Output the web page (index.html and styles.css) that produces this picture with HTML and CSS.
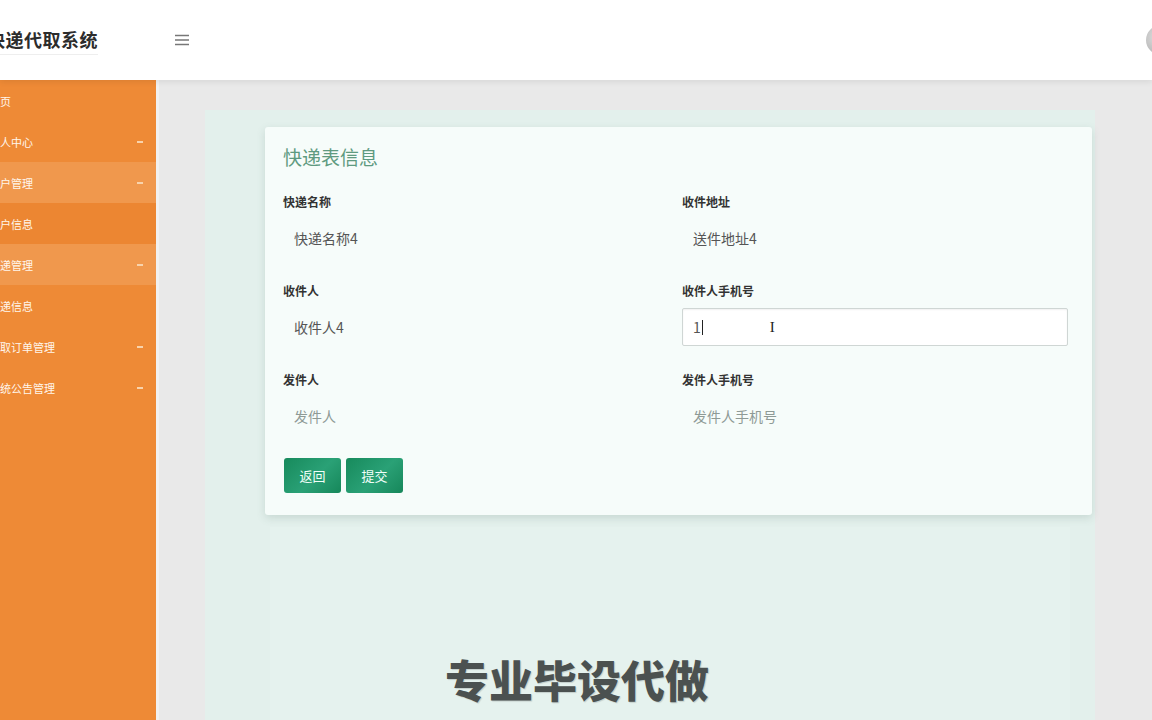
FILE: index.html
```html
<!DOCTYPE html>
<html lang="zh-CN">
<head>
<meta charset="utf-8">
<title>快递代取系统</title>
<link rel="stylesheet" href="styles.css">
</head>
<body>
<div class="app">
  <header class="topbar">
    <div class="brand"><span class="brand-title">快递代取系统</span></div>
    <button class="hamburger" type="button" aria-label="menu">
      <svg width="16" height="12" viewBox="0 0 16 12"><path d="M1 1.5h14M1 6h14M1 10.5h14" stroke="#777" stroke-width="1.4" fill="none"/></svg>
    </button>
    <div class="spacer"></div>
    <div class="avatar"></div>
  </header>
  <div class="layout">
    <aside class="sidebar">
      <ul class="menu">
        <li class="item"><span class="label">首页</span></li>
        <li class="item"><span class="label">个人中心</span><i class="arrow"></i></li>
        <li class="item light"><span class="label">用户管理</span><i class="arrow"></i></li>
        <li class="item dark"><span class="label">用户信息</span></li>
        <li class="item light"><span class="label">快递管理</span><i class="arrow"></i></li>
        <li class="item"><span class="label">快递信息</span></li>
        <li class="item"><span class="label">代取订单管理</span><i class="arrow"></i></li>
        <li class="item"><span class="label">系统公告管理</span><i class="arrow"></i></li>
      </ul>
    </aside>
    <main class="main">
      <div class="stage">
        <section class="card">
          <h2 class="card-title">快递表信息</h2>
          <form class="form">
            <div class="field">
              <label class="field-label">快递名称</label>
              <input class="field-input" value="快递名称4" readonly>
            </div>
            <div class="field">
              <label class="field-label">收件地址</label>
              <input class="field-input" value="送件地址4" readonly>
            </div>
            <div class="field">
              <label class="field-label">收件人</label>
              <input class="field-input" value="收件人4" readonly>
            </div>
            <div class="field">
              <label class="field-label">收件人手机号</label>
              <div class="field-input focused"><span>1</span><i class="caret"></i><span class="ibeam">I</span></div>
            </div>
            <div class="field">
              <label class="field-label">发件人</label>
              <input class="field-input" placeholder="发件人">
            </div>
            <div class="field">
              <label class="field-label">发件人手机号</label>
              <input class="field-input" placeholder="发件人手机号">
            </div>
            <div class="actions">
              <button class="btn" type="button">返回</button>
              <button class="btn" type="button">提交</button>
            </div>
          </form>
        </section>
        <div class="lower">
          <div class="watermark">专业毕设代做</div>
        </div>
      </div>
    </main>
  </div>
</div>
</body>
</html>
```

FILE: styles.css
```css
* { box-sizing: border-box; }
html, body {
  margin: 0;
  padding: 0;
  width: 1152px;
  height: 720px;
  overflow: hidden;
  font-family: "Noto Sans CJK SC", "Noto Sans", "Liberation Sans", sans-serif;
  background: #e9e9e9;
}
.app {
  display: flex;
  flex-direction: column;
  height: 720px;
}
.topbar {
  height: 80px;
  flex: none;
  display: flex;
  align-items: center;
  background: #ffffff;
  box-shadow: 0 2px 6px rgba(0,0,0,0.08);
  position: relative;
  z-index: 2;
}
.brand {
  width: 160px;
  display: flex;
  align-items: center;
}
.brand-title {
  margin-left: -13px;
  font-size: 18px;
  font-weight: 700;
  color: #2c2c2c;
  letter-spacing: 0.5px;
  padding-bottom: 2px;
  border-bottom: 1px solid #eeeeee;
}
.hamburger {
  margin-left: 14px;
  border: 0;
  background: transparent;
  padding: 0;
  width: 16px;
  height: 12px;
  display: flex;
}
.spacer { flex: 1; }
.avatar {
  width: 30px;
  height: 30px;
  border-radius: 50%;
  margin-right: -24px;
  background: radial-gradient(circle at 40% 40%, #e0e0e0, #a8a8a8);
}
.layout {
  flex: 1;
  display: flex;
  min-height: 0;
}
.sidebar {
  width: 159px;
  flex: none;
  background: #ee8a36;
  border-right: 3px solid #f1f1f1;
  overflow: hidden;
}
.menu {
  list-style: none;
  margin: 0;
  padding: 0;
}
.item {
  height: 41px;
  display: flex;
  align-items: center;
  padding-right: 13px;
  color: #fff6ec;
  font-size: 11px;
}
.item.light { background: #f0984d; }
.item.dark { background: #ec8632; }
.label {
  margin-left: -11px;
  flex: 1;
  white-space: nowrap;
}
.arrow {
  width: 6px;
  height: 2px;
  background: #f8d3ac;
}
.main {
  flex: 1;
  padding: 30px 0 0 46px;
  background: #e9e9e9;
  overflow: hidden;
}
.stage {
  width: 890px;
  height: 100%;
  background: #e3f0ec;
  padding-top: 17px;
  display: flex;
  flex-direction: column;
}
.card {
  margin-left: 60px;
  width: 827px;
  background: #f6fcfa;
  border-radius: 3px;
  box-shadow: 0 3px 8px rgba(80,110,100,0.18);
  padding: 18px 22px 22px 18px;
}
.card-title {
  margin: 0 0 26px 0;
  font-size: 19px;
  font-weight: 400;
  color: #5e9a80;
  line-height: 24px;
}
.form {
  display: grid;
  grid-template-columns: 399px 388px;
}
.field {
  display: flex;
  flex-direction: column;
  margin-bottom: 27px;
}
.field-label {
  font-size: 12px;
  font-weight: 700;
  color: #333333;
  line-height: 14px;
  margin-bottom: 10px;
}
.field-input {
  width: 386px;
  height: 38px;
  border: 1px solid transparent;
  background: transparent;
  padding: 0 10px;
  font-family: inherit;
  font-size: 14px;
  color: #555555;
  outline: none;
  display: flex;
  align-items: center;
}
.field-input::placeholder { color: #8e9a96; }
.field-input.focused {
  background: #ffffff;
  border: 1px solid #cfd6d4;
  border-radius: 2px;
  box-shadow: inset 0 1px 2px rgba(0,0,0,0.06);
}
.caret {
  width: 1px;
  height: 15px;
  background: #222;
  margin-left: 1px;
}
.ibeam {
  margin-left: 67px;
  font-family: "Liberation Serif", serif;
  font-size: 15px;
  color: #222;
}
.actions {
  grid-column: 1 / 3;
  display: flex;
  gap: 5px;
  margin-top: -4px;
  padding-left: 1px;
}
.btn {
  width: 57px;
  height: 35px;
  border: 0;
  border-radius: 3px;
  background: linear-gradient(135deg, #178a5c, #2aa176 55%, #16875a);
  color: #f2fff9;
  font-family: inherit;
  font-size: 13px;
  padding: 0;
}
.lower {
  margin-left: 65px;
  margin-top: 12px;
  width: 800px;
  flex: 1;
  background: #e5f2ee;
  padding: 124px 0 0 175px;
}
.watermark {
  font-size: 44px;
  font-weight: 900;
  color: #4b5150;
  line-height: 56px;
  text-shadow: 1px 1px 1px rgba(0,0,0,0.15);
}
```
